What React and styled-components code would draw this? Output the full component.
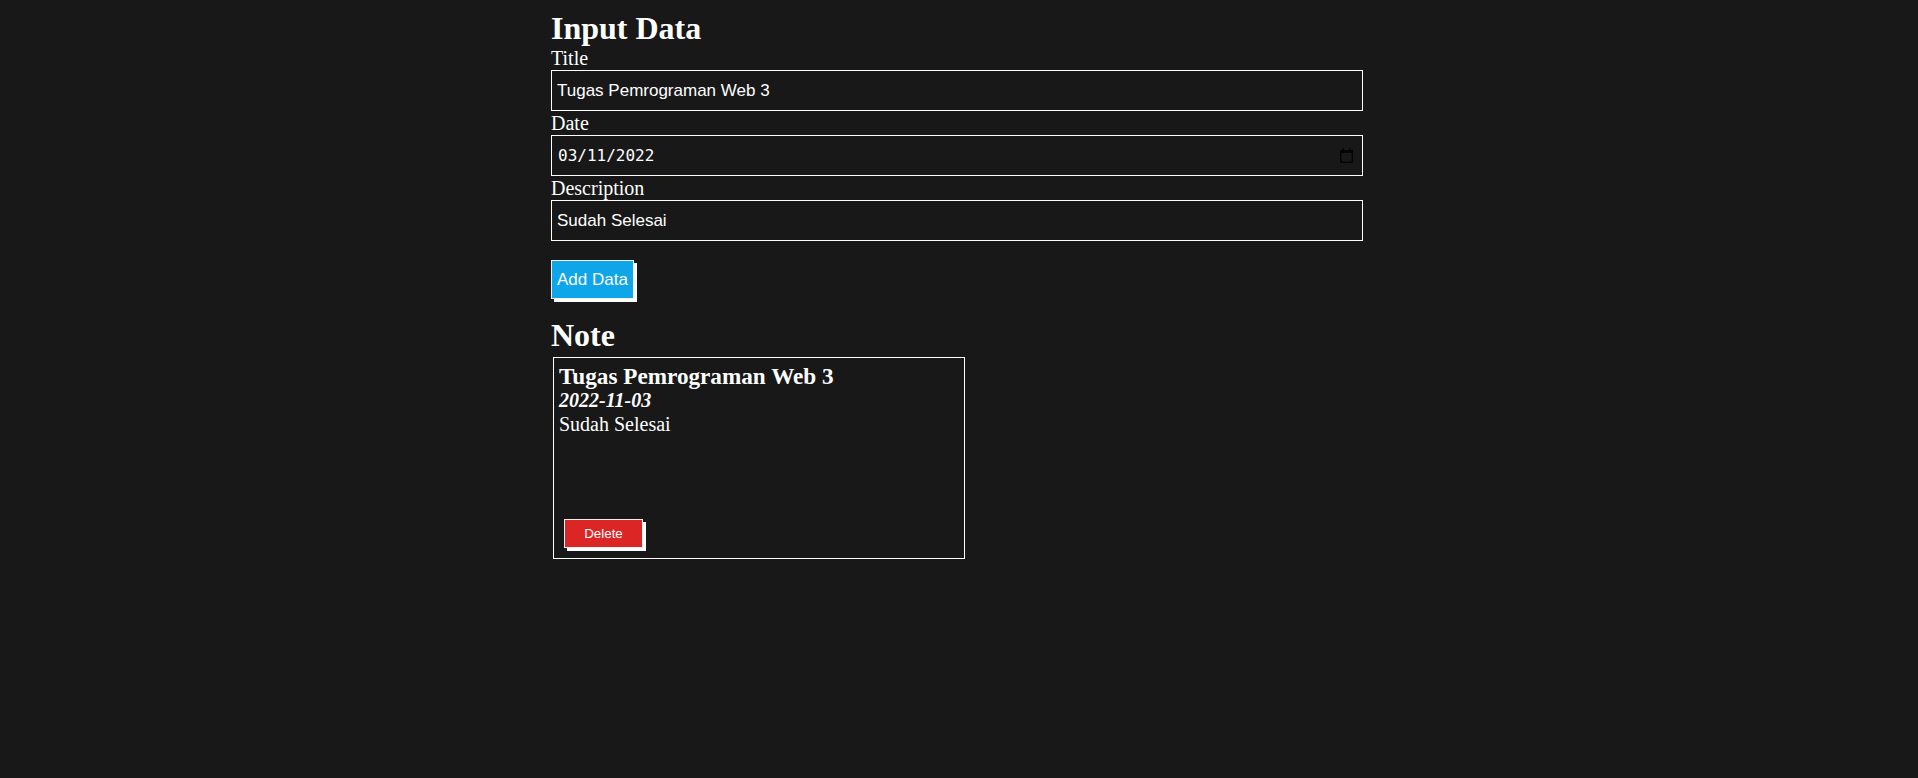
import React, { useState } from 'react';
import styled, { createGlobalStyle } from 'styled-components';

const GlobalStyle = createGlobalStyle`
  body {
    margin: 0;
    background: #181818;
    color: #ffffff;
    font-family: "Liberation Serif", "Times New Roman", serif;
  }
`;

const Wrapper = styled.main`
  width: 816px;
  margin: 0 auto;
  padding-top: 10px;
  box-sizing: border-box;
`;

const Heading = styled.h1`
  margin: 0;
  font-size: 32px;
  line-height: 36px;
  font-weight: bold;
`;

const Form = styled.form`
  display: flex;
  flex-direction: column;
  align-items: flex-start;
`;

const Label = styled.label`
  display: block;
  font-size: 20px;
  line-height: 24px;
`;

const TextInput = styled.input`
  display: block;
  width: calc(100% - 4px);
  height: 41px;
  box-sizing: border-box;
  margin: 0;
  padding: 0 5px;
  border: 1px solid #ffffff;
  background: transparent;
  color: #ffffff;
  font-family: "Liberation Sans", Arial, sans-serif;
  font-size: 17px;
  outline: none;
`;

const DateBox = styled.div`
  display: flex;
  align-items: center;
  width: calc(100% - 4px);
  height: 41px;
  box-sizing: border-box;
  padding: 0 9px 0 6px;
  border: 1px solid #ffffff;
`;

const DateText = styled.input`
  flex: 1;
  min-width: 0;
  border: none;
  padding: 0;
  margin: 0;
  background: transparent;
  color: #ffffff;
  font-family: "DejaVu Sans Mono", "Liberation Mono", monospace;
  font-size: 16px;
  outline: none;
`;

const ShadowButton = styled.button`
  border: 1px solid #f2f2f2;
  box-shadow: 3px 3px 0 #ffffff;
  color: #ffffff;
  font-family: "Liberation Sans", Arial, sans-serif;
  cursor: pointer;
  background: ${p => (p.$variant === 'danger' ? '#dc2626' : '#0ea5e9')};
`;

const AddButton = styled(ShadowButton)`
  margin: 19px 0 18px;
  padding: 9px 5px;
  font-size: 17px;
  line-height: 19px;
`;

const NoteList = styled.section`
  display: flex;
  flex-wrap: wrap;
  gap: 8px;
  padding: 4px 2px 0;
`;

const Card = styled.article`
  display: flex;
  flex-direction: column;
  width: 412px;
  height: 202px;
  box-sizing: border-box;
  padding: 5px;
  border: 1px solid #ffffff;
`;

const CardTitle = styled.h3`
  margin: 0;
  font-size: 23.2px;
  line-height: 26px;
  font-weight: bold;
`;

const CardDate = styled.p`
  margin: 0;
  font-size: 20px;
  line-height: 23.5px;
  font-weight: bold;
  font-style: italic;
`;

const CardText = styled.p`
  margin: 0;
  font-size: 20px;
  line-height: 23.5px;
`;

const DeleteButton = styled(ShadowButton)`
  align-self: flex-start;
  margin: auto 5px 5px;
  width: 79px;
  height: 29px;
  padding: 0;
  font-size: 13.33px;
`;

const CalendarIcon = () => (
  <svg width="13" height="15" viewBox="0 0 13 15" aria-hidden="true">
    <path d="M2.5 0h1.5v3H2.5zM9 0h1.5v3H9z" fill="#050505" />
    <rect x="0" y="2" width="13" height="3" fill="#050505" />
    <rect x="0.75" y="2.75" width="11.5" height="11.5" fill="none" stroke="#050505" strokeWidth="1.5" />
  </svg>
);

export default function App() {
  const [notes] = useState([
    { id: 1, title: 'Tugas Pemrograman Web 3', date: '2022-11-03', body: 'Sudah Selesai' },
  ]);

  return (
    <>
      <GlobalStyle />
      <Wrapper>
        <Heading>Input Data</Heading>
        <Form onSubmit={e => e.preventDefault()}>
          <Label htmlFor="title">Title</Label>
          <TextInput id="title" defaultValue="Tugas Pemrograman Web 3" />
          <Label htmlFor="date">Date</Label>
          <DateBox>
            <DateText id="date" defaultValue="03/11/2022" />
            <CalendarIcon />
          </DateBox>
          <Label htmlFor="description">Description</Label>
          <TextInput id="description" defaultValue="Sudah Selesai" />
          <AddButton type="submit">Add Data</AddButton>
        </Form>
        <Heading>Note</Heading>
        <NoteList>
          {notes.map(note => (
            <Card key={note.id}>
              <CardTitle>{note.title}</CardTitle>
              <CardDate>{note.date}</CardDate>
              <CardText>{note.body}</CardText>
              <DeleteButton type="button" $variant="danger">Delete</DeleteButton>
            </Card>
          ))}
        </NoteList>
      </Wrapper>
    </>
  );
}
